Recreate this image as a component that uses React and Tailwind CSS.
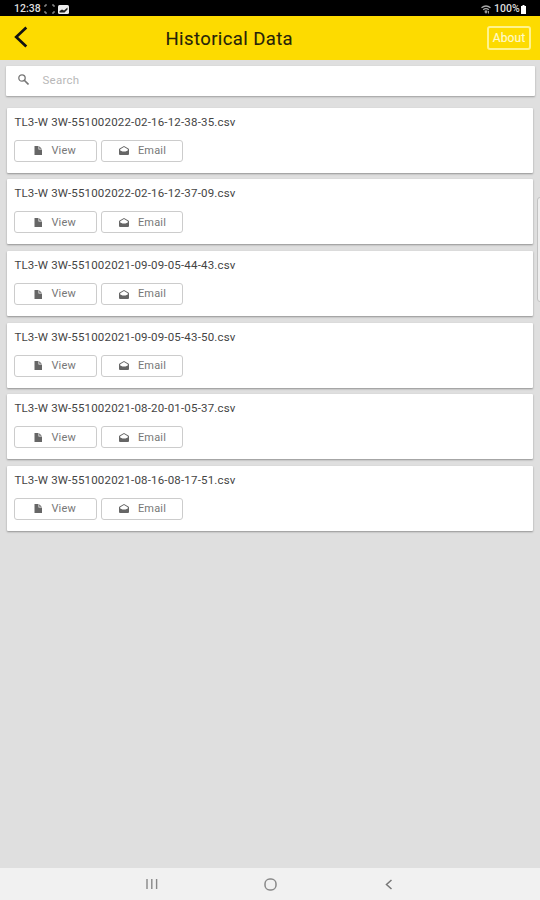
import React from 'react';

const files = [
  'TL3-W 3W-551002022-02-16-12-38-35.csv',
  'TL3-W 3W-551002022-02-16-12-37-09.csv',
  'TL3-W 3W-551002021-09-09-05-44-43.csv',
  'TL3-W 3W-551002021-09-09-05-43-50.csv',
  'TL3-W 3W-551002021-08-20-01-05-37.csv',
  'TL3-W 3W-551002021-08-16-08-17-51.csv',
];

const FileIcon = () => (
  <svg className="w-2 h-[9px]" viewBox="0 0 8 9" fill="#666">
    <path d="M.5 0h4v3.500H8V9H.5zM5.200.2 7.800 2.800H5.200z" />
  </svg>
);

const MailIcon = () => (
  <svg className="w-2.5 h-[9px]" viewBox="0 0 10 9" fill="#666">
    <path fillRule="evenodd" d="M5 0 9.400 2.400Q10 2.800 10 3.500V8q0 1-1 1H1Q0 9 0 8V3.500Q0 2.800 .6 2.400ZM5 1 1.200 3.200V4.600L3.500 5.400H6.500L8.800 4.600V3.200Z" />
  </svg>
);

const StatusBar = () => (
  <div className="flex h-4 items-center justify-between bg-black pl-3.5 pr-3.5 pt-0.5 text-white">
    <div className="flex items-center">
      <span className="w-[27px] text-[10.5px] font-medium leading-none text-[#ddd]">12:38</span>
      <svg className="ml-[3px] h-2.5 w-[11px]" viewBox="0 0 11 10" fill="none" stroke="#aaa">
        <path d="M1 3V1h2M8 1h2v2M10 7v2H8M3 9H1V7" />
      </svg>
      <svg className="ml-[3px] h-[9px] w-[11px]" viewBox="0 0 11 9">
        <rect width="11" height="9" rx="1.500" fill="#eee" />
        <path d="M1.500 7.500V6L4 4.500 6 5.500 9.500 2.500V4.500L6.500 7.500Z" fill="#222" />
      </svg>
    </div>
    <div className="flex items-center">
      <svg className="h-[9px] w-2.5" viewBox="0 0 10 9" fill="none" stroke="#aaa" strokeWidth="1.300">
        <path d="M.5 2.800Q5-.8 9.500 2.800M2.200 4.700Q5 2.500 7.800 4.700M3.700 6.500Q5 5.500 6.300 6.500" />
        <path d="M5 8.300 3.900 7h2.200zM7.500 6v2.500" strokeWidth=".9" />
      </svg>
      <span className="ml-[3px] w-[27px] text-[10.5px] font-medium leading-none text-[#ddd]">100%</span>
      <svg className="h-[9px] w-[5px]" viewBox="0 0 5 9" fill="#fff">
        <path d="M1.500 0h2v1H5v8H0V1h1.500z" />
      </svg>
    </div>
  </div>
);

const Header = () => (
  <header className="flex h-11 items-center bg-[#fddb00] pl-3.5 pr-[9px]">
    <svg className="-mt-0.5 h-[22px] w-[14px]" viewBox="0 0 14 22" fill="none" stroke="#111" strokeWidth="2.700">
      <path d="M12.300 1.500 2.200 11 12.300 20.500" />
    </svg>
    <h1 className="ml-[137.500px] mt-px whitespace-nowrap text-[18.5px] font-normal leading-6 tracking-[0.4px] text-[#26230a] [-webkit-text-stroke:0.1px_#26230a]">Historical Data</h1>
    <button className="ml-auto flex h-6 w-11 items-center justify-center rounded-[3px] border-2 border-[#fff38c] text-[12px] font-normal tracking-[0.1px] text-[#fffac8] [-webkit-text-stroke:0.2px_#fffac8]">
      About
    </button>
  </header>
);

const FileCard = ({ name }) => (
  <div className="h-[65px] rounded-[1px] bg-white pl-[7px] pt-1.5 shadow-[0_1px_2px_rgba(0,0,0,0.35)]">
    <p className="whitespace-nowrap text-[11.5px] leading-4 tracking-[0.18px] text-[#444]">{name}</p>
    <div className="mt-2.5 flex gap-1">
      <button className="flex h-[22px] w-[82.500px] items-center rounded-[3px] border border-[#ccc] pl-[19px] text-[11px] tracking-[0.2px] text-[#777]">
        <FileIcon />
        <span className="ml-[9px] mt-px">View</span>
      </button>
      <button className="flex h-[22px] w-[82px] items-center rounded-[3px] border border-[#ccc] pl-[17px] text-[11px] tracking-[0.2px] text-[#777]">
        <MailIcon />
        <span className="ml-[9px] mt-px">Email</span>
      </button>
    </div>
  </div>
);

const NavBar = () => (
  <nav className="mt-auto flex h-8 items-center bg-[#f1f1f1] pl-[146px]">
    <svg className="h-3 w-3" viewBox="0 0 12 12" stroke="#888" strokeWidth="1.400">
      <path d="M1 1v10M5.800 1v10M10.600 1v10" />
    </svg>
    <svg className="ml-[105.500px] h-[13px] w-[13px]" viewBox="0 0 13 13" fill="none" stroke="#888" strokeWidth="1.500">
      <rect x="1" y="1" width="11" height="11" rx="4.800" />
    </svg>
    <svg className="ml-[108px] h-[11px] w-2" viewBox="0 0 8 11" fill="none" stroke="#777" strokeWidth="1.500">
      <path d="M6.500 1 1.500 5.500 6.500 10" />
    </svg>
  </nav>
);

export default function App() {
  return (
    <div className="relative flex h-[900px] w-[540px] flex-col overflow-hidden bg-[#dfdfdf] font-[Roboto,sans-serif]">
      <StatusBar />
      <Header />
      <div className="ml-1.5 mr-[5px] mt-[5.500px] flex h-[30px] shrink-0 items-center rounded-[1px] bg-white pl-3 shadow-[0_1px_2px_rgba(0,0,0,0.3)]">
        <svg className="-mt-0.5 h-[11px] w-[11px]" viewBox="0 0 11 11" fill="none" stroke="#777">
          <circle cx="4" cy="4" r="3.200" strokeWidth="1.300" />
          <path d="m6.500 6.500 4 4" strokeWidth="1.600" />
        </svg>
        <span className="ml-[13.500px] text-[11.5px] tracking-[0.25px] text-[#b8b8b8]">Search</span>
      </div>
      <main className="ml-[7.400px] mr-[6.600px] mt-[12.400px] flex flex-col gap-[6.600px]">
        {files.map((name) => (
          <FileCard key={name} name={name} />
        ))}
      </main>
      <NavBar />
      {/* edge panel handle */}
      <div className="absolute left-[537px] top-[197px] h-[105px] w-2 rounded-[3px] border border-[#c2c2c2] bg-[#eee]" />
    </div>
  );
}
